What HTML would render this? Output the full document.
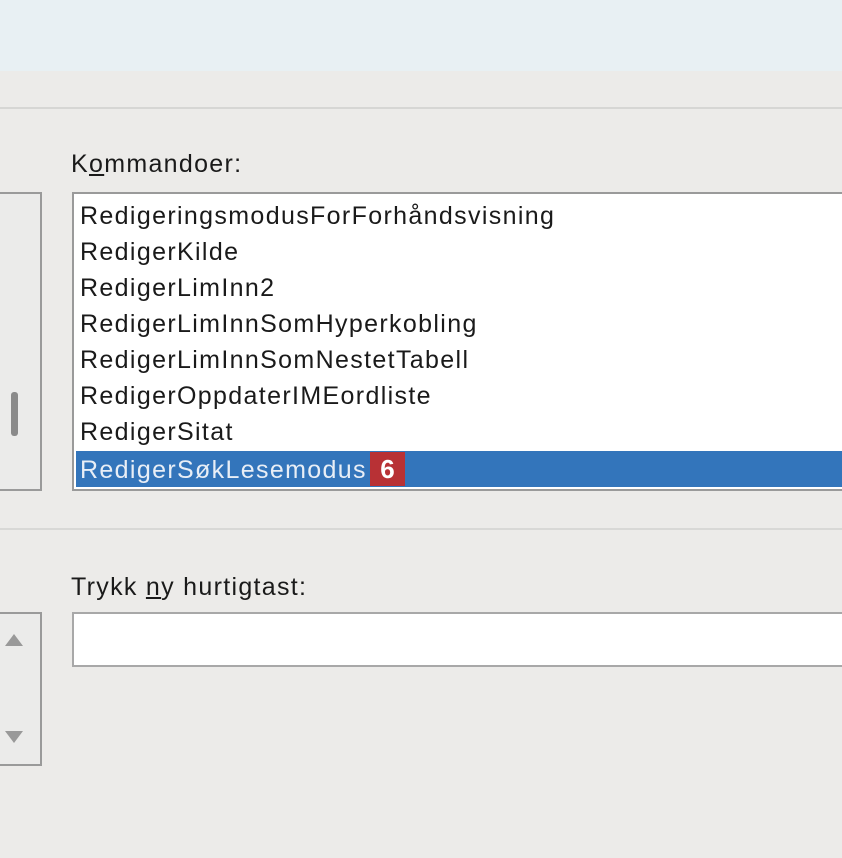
<!DOCTYPE html>
<html><head><style>
body{margin:0;width:842px;height:858px;background:#ecebe9;position:relative;overflow:hidden;font-family:"Liberation Sans",sans-serif;color:#1a1a1a}
.a{position:absolute}
.item{position:absolute;left:6px;font-size:25px;letter-spacing:1.35px;line-height:36px;height:36px;white-space:nowrap}
.lbl{font-size:25px;letter-spacing:1.3px}
</style></head><body>
<div class="a" style="left:0;top:0;width:842px;height:71px;background:#e8f0f3"></div>
<div class="a" style="left:0;top:107px;width:842px;height:2px;background:#d6d6d4"></div>
<div class="a lbl" style="left:71px;top:150px">K<u>o</u>mmandoer:</div>
<div class="a" style="left:-2px;top:192px;width:40px;height:295px;border:2px solid #9a9a9a;background:#ebebea"></div>
<div class="a" style="left:11px;top:392px;width:7px;height:44px;background:#8a8a8a;border-radius:3px"></div>
<div class="a" style="left:72px;top:192px;width:790px;height:295px;border:2px solid #9a9a9a;background:#fff">
<div class="item" style="top:4px">RedigeringsmodusForForhåndsvisning</div>
<div class="item" style="top:40px">RedigerKilde</div>
<div class="item" style="top:76px">RedigerLimInn2</div>
<div class="item" style="top:112px">RedigerLimInnSomHyperkobling</div>
<div class="item" style="top:148px">RedigerLimInnSomNestetTabell</div>
<div class="item" style="top:184px">RedigerOppdaterIMEordliste</div>
<div class="item" style="top:220px">RedigerSitat</div>
<div class="a" style="left:2px;top:257px;width:790px;height:36px;background:#3375bb"></div>
<div class="item" style="top:258px;color:#e8eef6">RedigerSøkLesemodus</div>
<div class="a" style="left:296px;top:258px;width:35px;height:34px;background:#b83135;color:#fff;font-weight:bold;font-size:26px;text-align:center;line-height:34px">6</div>
</div>
<div class="a" style="left:0;top:528px;width:842px;height:2px;background:#d8d8d6"></div>
<div class="a lbl" style="left:71px;top:573px">Trykk <u>n</u>y hurtigtast:</div>
<div class="a" style="left:72px;top:612px;width:790px;height:51px;border:2px solid #a8a8a8;background:#fff"></div>
<div class="a" style="left:-2px;top:612px;width:40px;height:150px;border:2px solid #9a9a9a;background:#ebebea"></div>
<svg class="a" style="left:4px;top:628px" width="22" height="120"><path d="M1 18 L10 6 L19 18Z" fill="#999"/><path d="M1 103 L19 103 L10 115Z" fill="#999"/></svg>
</body></html>
